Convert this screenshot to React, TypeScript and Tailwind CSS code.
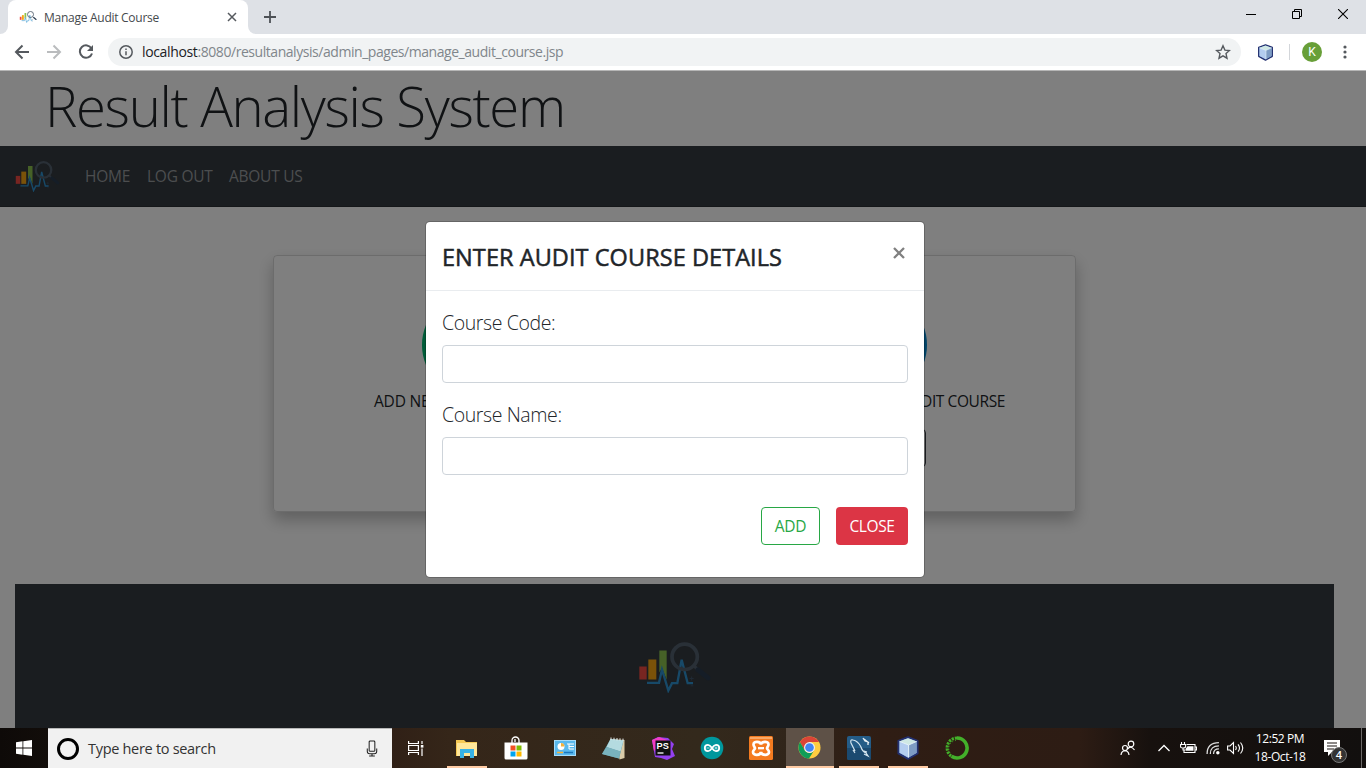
import React from "react";

function Logo({ className }: { className: string }) {
  return (
    <svg viewBox="50 38 222 152" className={className} fill="none">
      <rect x="57" y="111" width="22" height="39" fill="#f04a42" />
      <rect x="84" y="90" width="24" height="60" fill="#f5a512" />
      <path d="M117 63h22v88l-14-36-8 14z" fill="#8cc34f" />
      <path d="M80 160h36l9-40 19 63 11-22h16l13-70 18 70h16" stroke="#2f93d0" strokeWidth="7" />
      <circle cx="193" cy="82" r="38" stroke="#53606f" strokeWidth="11" />
      <path d="M222 110l12 12" stroke="#53606f" strokeWidth="9" />
      <path d="M233 121l30 24" stroke="#2a3b4f" strokeWidth="15" strokeLinecap="round" />
      <path d="M214 141v12M208 147h12M211 169h8" stroke="#3f5368" strokeWidth="3" />
    </svg>
  );
}

function Cube({ className }: { className: string }) {
  return (
    <svg viewBox="0 0 20 20" className={className} strokeLinejoin="round">
      <path d="M10 1l8 3v10.500l-8 4.500-8-4.500V4z" fill="#8fb3dc" stroke="#233070" strokeWidth="1.600" />
      <path d="M10 1.800L17 4.300 10.500 7.500 3 4.300z" fill="#cfe8e4" />
      <path d="M3 4.500l7.500 3V18L3 14z" fill="#b4cdf0" />
      <path d="M17.200 4.500l-6.700 3V18l6.700-3.800z" fill="#7e9cc4" />
      <path d="M10.500 7.500V18M10.500 7.500L3 4.500M10.500 7.500l6.700-3" stroke="#e8f4fa" strokeWidth=".8" fill="none" />
    </svg>
  );
}

function Browser() {
  return (
    <header className="shrink-0">
      <div className="flex h-[34px] bg-[#dee1e6]">
        <div className="flex w-2 items-end bg-white">
          <div className="h-full w-2 rounded-br-lg bg-[#dee1e6]" />
        </div>
        <div className="bg-[#dee1e6]">
          <div className="flex h-[34px] w-[240px] items-center rounded-t-lg bg-white pl-[11px] pr-[11px]">
            <Logo className="h-[12px] w-[18px]" />
            <span className="ml-[7px] flex-1 whitespace-nowrap pt-px text-[12px] tracking-[-0.27px] text-[#45494d]">Manage Audit Course</span>
            <svg viewBox="0 0 10 10" className="size-[10px]" stroke="#55595e" strokeWidth="1.500"><path d="M1 1l8 8M9 1L1 9" /></svg>
          </div>
        </div>
        <div className="w-2 bg-white"><div className="h-full rounded-bl-lg bg-[#dee1e6]" /></div>
        <svg viewBox="0 0 12 12" className="ml-2 mt-[11px] size-3" stroke="#4d5156" strokeWidth="1.800"><path d="M6 0v12M0 6h12" /></svg>
        <div className="ml-auto mr-[18px] flex items-start gap-[36px] pt-[9px]">
          <svg viewBox="0 0 10 10" className="size-[10px]" stroke="#000" strokeWidth="1"><path d="M0 5.500h10" /></svg>
          <svg viewBox="0 0 10 10" className="size-[10px]" stroke="#000" strokeWidth="1" fill="none"><path d="M.5 2.500h7v7h-7zM2.500 2.500v-2h7v7h-2" /></svg>
          <svg viewBox="0 0 10 10" className="size-[10px]" stroke="#000" strokeWidth="1.100"><path d="M0 0l10 10M10 0L0 10" /></svg>
        </div>
      </div>
      <div className="flex h-[36px] items-center bg-white pl-[14px] pr-[19px]">
        <svg viewBox="0 0 16 16" className="size-4" stroke="#55595e" strokeWidth="2" fill="none"><path d="M15 8H2M8.500 1.500L2 8l6.500 6.500" /></svg>
        <svg viewBox="0 0 16 16" className="ml-4 size-4" stroke="#babcbe" strokeWidth="2" fill="none"><path d="M1 8h13M7.500 1.500L14 8l-6.500 6.500" /></svg>
        <svg viewBox="0 0 16 16" className="ml-4 size-4" stroke="#55595e" strokeWidth="2" fill="none"><path d="M13.500 4.500A6.200 6.200 0 1 0 14 9.500" /><path d="M15 1v6H9z" fill="#55595e" stroke="none" /></svg>
        <div className="ml-[14px] flex h-7 flex-1 items-center rounded-full bg-[#f1f3f4] pl-[11px] pr-[10px]">
          <svg viewBox="0 0 14 14" className="size-[14px]" stroke="#55595e" strokeWidth="1.500" fill="none"><circle cx="7" cy="7" r="6.200" /><path d="M7 6.200v4M7 3.500v1.600" /></svg>
          <span className="ml-[9px] flex-1 whitespace-nowrap pb-px text-[14px] tracking-[-0.45px] text-[#80868b]"><span className="tracking-[-0.35px] text-[#202124]">localhost</span>:8080/resultanalysis/admin_pages/manage_audit_course.jsp</span>
          <svg viewBox="0 0 16 16" className="size-4" stroke="#55595e" strokeWidth="1.400" fill="none"><path d="M8 1.800l1.900 4.300 4.600.4-3.500 3.100 1 4.600L8 11.800l-4 2.400 1-4.600L1.500 6.500l4.600-.4z" /></svg>
        </div>
        <Cube className="ml-4 size-[17px]" />
        <div className="ml-[15px] h-4 w-px bg-[#d3d6da]" />
        <div className="ml-[12px] flex size-5 items-center justify-center rounded-full bg-[#689f38] font-[Roboto] text-[12px] text-white">K</div>
        <svg viewBox="0 0 4 14" className="ml-[21px] h-[14px] w-1" fill="#55595e"><circle cx="2" cy="2" r="1.600" /><circle cx="2" cy="7" r="1.600" /><circle cx="2" cy="12" r="1.600" /></svg>
      </div>
    </header>
  );
}

function Field({ label }: { label: string }) {
  return (
    <div className="mb-4">
      <label className="mb-2 block h-[30px] text-[19.500px] font-light leading-[32px] tracking-[-0.4px] text-[#212529]">{label}</label>
      <input className="block h-[38px] w-full rounded border border-[#ced4da] bg-white" />
    </div>
  );
}

function Modal() {
  return (
    <div className="absolute left-[425px] top-[150px] w-[500px] rounded-[5px] border border-black/20 bg-white bg-clip-padding text-[#212529]">
      <div className="flex h-[69px] items-start justify-between border-b border-[#e9ecef] px-4">
        <h4 className="whitespace-nowrap pt-[18px] text-[23.500px] leading-[34px] tracking-[0.06px] [-webkit-text-stroke:0.5px_#212529]">ENTER AUDIT COURSE DETAILS</h4>
        <svg viewBox="0 0 12 12" className="mr-[3px] mt-[25px] size-3" stroke="#808080" strokeWidth="2.300"><path d="M1 1l10 10M11 1L1 11" /></svg>
      </div>
      <div className="px-4 pt-4">
        <Field label="Course Code:" />
        <Field label="Course Name:" />
        <div className="flex justify-end gap-4 pb-8 pt-4 text-[15.500px]">
          <button className="h-[38px] w-[59px] rounded border border-[#28a745] pt-px tracking-[-0.2px] text-[#28a745]">ADD</button>
          <button className="h-[38px] w-[72px] rounded bg-[#dc3545] pt-px tracking-[-0.4px] text-white">CLOSE</button>
        </div>
      </div>
    </div>
  );
}

function Page() {
  return (
    <main className="relative h-[658px] shrink-0 overflow-hidden border-t border-[#b6b6b6] bg-white">
      <h1 className="h-[75px] whitespace-nowrap pl-[45px] text-[54.500px] font-light leading-[70px] tracking-[-1.350px] text-[#212529]">Result Analysis System</h1>
      <nav className="flex h-[61px] items-center border-b border-[#2a2e32] bg-[#343a40] pl-[14px] text-[15.500px] tracking-[-0.25px] text-[#999c9f]">
        <Logo className="h-[31px] w-[46px]" />
        <div className="ml-[25px] flex gap-4 whitespace-nowrap pt-[2px]">
          <span className="w-[46px]">HOME</span><span className="w-[66px]">LOG OUT</span><span>ABOUT US</span>
        </div>
      </nav>
      <section className="ml-[273px] mt-12 flex h-[257px] w-[803px] rounded border border-black/15 text-[15.500px] tracking-[-0.4px] text-[#212529] shadow-[0_8px_16px_rgba(0,0,0,0.25)]">
        <div className="flex w-[400px] flex-col items-center pt-[37px]">
          <div className="size-[104px] rounded-full bg-[#00b871]" />
          <p className="mt-[-8px] w-full whitespace-nowrap pl-[100px] leading-[24px] tracking-[-0.2px]">ADD NEW</p>
        </div>
        <div className="flex flex-1 flex-col items-center pt-[37px]">
          <div className="size-[104px] rounded-full bg-[#0087cf]" />
          <p className="mt-[-8px] w-full whitespace-nowrap pr-[70px] text-right leading-[24px]">AUDIT COURSE</p>
          <div className="mr-px mt-[16px] h-[38px] w-[104px] rounded border border-[#343a40]" />
        </div>
      </section>
      <footer className="ml-[15px] mt-[72px] flex h-[144px] w-[1319px] bg-[#343a40] pl-[622px] pt-[58px]">
        <Logo className="h-[51px] w-[74px]" />
      </footer>
      <div className="absolute inset-0 bg-black/50" />
      <Modal />
    </main>
  );
}

function Explorer() {
  return <svg viewBox="0 0 24 24" className="size-6"><path d="M1 4h8l2 2h11v14H1z" fill="#f5c955" /><path d="M2 7h20v13H2z" fill="#ffe79a" /><path d="M5 13h14v9h-4v-5H9v5H5z" fill="#37b2e5" /></svg>;
}
function Store() {
  return <svg viewBox="0 0 24 24" className="size-6"><path d="M8 7V4.500a3.500 3.500 0 0 1 7 0V7M11 6V3" stroke="#fff" strokeWidth="1.300" fill="none" /><path d="M.5 6.500h23V22q0 1.500-1.500 1.500H2Q.5 23.500.5 22z" fill="#fff" /><path d="M6.500 9.500h5v5h-5z" fill="#f25022" /><path d="M12.500 9.500h5v5h-5z" fill="#7fba00" /><path d="M6.500 15.500h5v5h-5z" fill="#00a4ef" /><path d="M12.500 15.500h5v5h-5z" fill="#ffb900" /></svg>;
}
function ControlPanel() {
  return <svg viewBox="0 0 24 24" className="size-6"><rect x="1.500" y="4.500" width="21" height="15" fill="#5ab9ee" stroke="#a7dcfa" /><circle cx="8" cy="10.500" r="3.500" fill="#fff" /><path d="M8 10.500V7a3.500 3.500 0 0 1 3.500 3.500z" fill="#f4b13c" /><path d="M14 8h2v5h5M16 8h5M16 10.500h5" stroke="#fff" fill="none" /><path d="M4 16.500h6" stroke="#f4b13c" strokeWidth="1.500" /><path d="M11 16.500h9" stroke="#1b77bd" strokeWidth="1.500" /></svg>;
}
function Notepad() {
  return (
    <svg viewBox="0 0 24 24" className="size-6">
      <path d="M8.500 3L22.500 4v18l-5 1.500L17 21z" fill="#d9cba8" />
      <path d="M8.500 3l13 1.500-4.500 18L0 18z" fill="#5f9aa6" />
      <path d="M8.500 3l13 1.500-3 11L4.500 11z" fill="#b4dbe0" />
      <path d="M4.500 11l14 4.500-1.500 7L0 18z" fill="#79b3be" />
      <path d="M9 1.500v2.500M12 1.700v2.500M15 2v2.500M18 2.300v2.500M21 2.600v2.500" stroke="#e7eeee" />
    </svg>
  );
}
function PhpStorm() {
  return <svg viewBox="0 0 24 24" className="size-6"><path d="M1 4l6-3 10 1 6 6-2 5 3 7-8 4-6-2-6-1z" fill="#9440ef" /><path d="M1 4l7-3 8 3L3 15z" fill="#f23cc5" /><rect x="4.500" y="4.500" width="15" height="15" fill="#101010" /><text x="5.500" y="12.500" fontFamily="Liberation Sans" fontWeight="700" fontSize="9.200" fill="#fff">PS</text><path d="M6.500 17h6" stroke="#fff" strokeWidth="1.300" /></svg>;
}
function Arduino() {
  return <svg viewBox="0 0 24 24" className="size-6" fill="none"><circle cx="12" cy="12" r="11.300" fill="#00979d" /><path d="M12 12c-1.500-2.300-2.500-3.200-4-3.200a3.200 3.200 0 0 0 0 6.400c1.500 0 2.500-.9 4-3.200s2.500-3.200 4-3.200a3.200 3.200 0 0 1 0 6.400c-1.500 0-2.500-.9-4-3.200z" stroke="#fff" strokeWidth="1.800" /><path d="M6.500 12h3M14.500 12h3M16 10.500v3" stroke="#fff" strokeWidth=".7" /></svg>;
}
function Xampp() {
  return (
    <svg viewBox="0 0 24 24" className="size-6" fill="none">
      <rect width="24" height="24" rx="1.500" fill="#f47b20" />
      <path d="M1 1h22v2H1z" fill="#f9a968" />
      <path d="M12 8.500C11.500 5 4.500 4.800 4.500 8.500c0 2 1.500 2.500 1.500 3.700S4 14 4 16c0 4 7.500 3.600 8 0 .5 3.600 8 4 8 0 0-2-2-2.600-2-3.800s1.500-1.700 1.500-3.700c0-3.700-7-3.500-7.500 0z" stroke="#fff" strokeWidth="2.700" />
      <path d="M9 12.200h6" stroke="#fff" strokeWidth="2.300" />
    </svg>
  );
}
function Chrome() {
  return <svg viewBox="0 0 24 24" className="size-[23px]"><circle cx="12" cy="12" r="11.500" fill="#ffcd40" /><path d="M2 6.300A11.500 11.500 0 0 1 22 6.300H12L7 15z" fill="#db4437" /><path d="M2 6.300L7.200 15a5.600 5.600 0 0 0 9.400.5L11.500 23.500A11.500 11.500 0 0 1 2 6.300z" fill="#0f9d58" /><circle cx="12" cy="12" r="5.700" fill="#f1f1f1" /><circle cx="12" cy="12" r="4.500" fill="#4285f4" /></svg>;
}
function MySql() {
  return <svg viewBox="0 0 24 24" className="size-6" fill="none"><rect width="24" height="24" rx="2" fill="#245c87" /><path d="M0 12h24v10q0 2-2 2H2q-2 0-2-2z" fill="#1b4a70" /><path d="M8 15L4 7q-1-4 2-3 5 1 8 7 1 4 5 6l2 3-4-2M6 14l2 3M17 15l3 1" stroke="#d4e5ef" strokeWidth="1.200" /><path d="M16 2l2 3 3 1v3M17 3l5 4" stroke="#e9f0f4" strokeWidth="1.300" /></svg>;
}
function Anaconda() {
  return <svg viewBox="0 0 24 24" className="size-6" fill="none" stroke="#43b02a"><path d="M12 2a10 10 0 1 1-5.500 18.300" strokeWidth="3.600" /><path d="M12 2A10 10 0 0 0 6.500 20.300" strokeWidth="3" strokeDasharray="2.200 1" /><path d="M11 4.500A8 8 0 0 0 6 18" strokeWidth="1" strokeDasharray="1 2" /></svg>;
}

const apps = [
  { icon: <Explorer />, open: true },
  { icon: <Store /> },
  { icon: <ControlPanel /> },
  { icon: <Notepad /> },
  { icon: <PhpStorm /> },
  { icon: <Arduino /> },
  { icon: <Xampp /> },
  { icon: <Chrome />, open: true, active: true },
  { icon: <MySql />, open: true },
  { icon: <Cube className="size-6" />, open: true },
  { icon: <Anaconda /> },
];

function Taskbar() {
  return (
    <div className="flex h-10 shrink-0 bg-[linear-gradient(90deg,#0e0a08_0px,#120d0a_48px,#302016_392px,#352619_450px,#33291c_700px,#31251a_790px,#2f1d14_880px,#2d1c14_1080px,#17110e_1150px,#120f0e_1366px)] text-white">
      <div className="flex w-12 items-center justify-center">
        <svg viewBox="0 0 16 16" className="size-4" fill="#fff"><path d="M0 2.300L6.500 1.300v6.200H0zM7.300 1.200L16 0v7.500H7.300zM0 8.500h6.500v6.200L0 13.700zM7.300 8.500H16V16l-8.700-1.200z" /></svg>
      </div>
      <div className="flex w-[344px] items-center border-t border-[#b8b8b8] bg-[#f1f1f1] pl-[9px] pr-[14px]">
        <div className="size-[22px] rounded-full border-[3px] border-black" />
        <span className="ml-[9px] flex-1 text-[14.500px] tracking-[-0.3px] text-[#333]">Type here to search</span>
        <svg viewBox="0 0 12 18" className="h-[17px] w-3" stroke="#222" strokeWidth="1.100" fill="none"><rect x="3" y="1" width="6" height="11" rx="1" /><path d="M1 9v3q0 2.500 2.500 2.500h5Q11 14.500 11 12V9M6 14.500V17M3 17h6" /></svg>
      </div>
      <div className="flex w-[50px] items-center justify-center pr-[2px]">
        <svg viewBox="0 0 16 16" className="size-4" stroke="#fff" strokeWidth="1.200" fill="none"><path d="M.6 1v2.500h9.800V1M.6 15v-2.500h9.800V15M.6 5.500h9.800v5H.6zM14 1v3M14 8.500V16" /><path d="M12.800 5h2.600v2.600h-2.600z" fill="#fff" stroke="none" /></svg>
      </div>
      <div className="flex">
        {apps.map((app, i) => (
          <div key={i} className="flex w-[49px] flex-col items-center">
            <div className={app.active ? "flex h-[38px] w-12 items-center justify-center bg-[#5e5147] pt-px" : "flex h-[38px] w-12 items-center justify-center pt-px"}>{app.icon}</div>
            <div className={app.active ? "h-[2px] w-12 bg-[#ffcba4]" : app.open ? "h-[2px] w-10 bg-[#ffcba4]" : "h-[2px]"} />
          </div>
        ))}
      </div>
      <div className="ml-auto flex items-center">
        <svg viewBox="0 0 16 16" className="size-4" stroke="#fff" strokeWidth="1.200" fill="none"><circle cx="11" cy="4" r="2.800" /><path d="M7.500 9q3.500-4 7 1" /><circle cx="5" cy="8" r="2.500" /><path d="M1 15q.5-4 4-4.300 3.500.3 4 4.300" /></svg>
        <svg viewBox="0 0 12 12" className="ml-[22px] size-3" stroke="#fff" strokeWidth="1.300" fill="none"><path d="M.5 9L6 3.500 11.500 9" /></svg>
        <svg viewBox="0 0 17 12" className="ml-[10px] h-3 w-[17px]" stroke="#fff" strokeWidth="1.100" fill="none"><path d="M6.500 2.500h8.500v8H4V8" /><path d="M15 5h1.500v3H15M1.500 0v2.500M4.500 0v2.500M.6 2.500h5v2Q5.600 6 3 6T.6 4.500zM3 6v2h2" /><path d="M7.500 4.200h6v4.600h-8V7z" fill="#fff" stroke="none" /></svg>
        <svg viewBox="0 0 13 13" className="ml-[9px] size-[14px]" stroke="#ddd" strokeWidth="1.200" fill="none"><path d="M1 12Q1 1.500 12 1.500M4 12q0-7.500 8-7.500M7 12q0-4.700 5-4.700" /><circle cx="11" cy="11" r="1.600" fill="#fff" stroke="none" /></svg>
        <svg viewBox="0 0 17 14" className="ml-[7px] h-[14px] w-[17px]" stroke="#fff" strokeWidth="1.100" fill="none"><path d="M.6 5v4H3l3.500 3.500v-11L3 5zM8.500 5q1.500 2 0 4M11 3.300q3 3.700 0 7.400M13.500 1.500q4.500 5.500 0 11" /></svg>
        <div className="ml-[9px] w-[54px] whitespace-nowrap text-center text-[12px] leading-[18px] tracking-[-0.4px]"><div>12:52 PM</div><div>18-Oct-18</div></div>
        <div className="relative ml-[17px] size-6">
          <svg viewBox="0 0 24 24" className="size-6" fill="#fff"><path d="M0 4h16v12H8l-4 4v-4H0z" /><path d="M3 7h10M3 10h10M3 13h7" stroke="#1a1513" strokeWidth="1.100" /></svg>
          <span className="absolute left-[7px] top-[11px] flex size-4 items-center justify-center rounded-full border border-[#777] bg-[#333] text-[11px] font-semibold">4</span>
        </div>
        <div className="ml-[13px] mr-1 h-10 w-px bg-[#6b6867]" />
      </div>
    </div>
  );
}

export default function App() {
  return (
    <div className="flex h-[768px] w-[1366px] flex-col overflow-hidden font-['Open_Sans','Noto_Sans',sans-serif]">
      <Browser />
      <Page />
      <Taskbar />
    </div>
  );
}
